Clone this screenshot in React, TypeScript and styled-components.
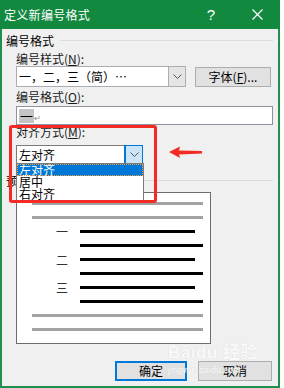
import styled, { createGlobalStyle } from 'styled-components';

const Global = createGlobalStyle`
  html, body {
    margin: 0;
    padding: 0;
    background: #ffffff;
  }
  body {
    font-family: 'Noto Sans CJK SC', 'Liberation Sans', sans-serif;
    font-size: 12px;
    color: #000;
  }
`;

const Dialog = styled.div`
  position: relative;
  box-sizing: border-box;
  width: 280px;
  height: 388px;
  background: #f0f0f0;
  border: 2px solid #1f9050;
  border-top: none;
  display: flex;
  flex-direction: column;
`;

const TitleBar = styled.div`
  height: 29px;
  margin: 0 -2px;
  background: #12893f;
  color: #ffffff;
  display: flex;
  align-items: center;
  padding-left: 4px;
  font-size: 12px;
  letter-spacing: 0.3px;
`;

const TitleText = styled.span`
  flex: 1;
`;

const TitleButton = styled.span`
  width: 46px;
  display: flex;
  justify-content: center;
  align-items: center;
  font-size: 15px;
  font-family: 'Liberation Sans', sans-serif;
`;

const Content = styled.div`
  position: relative;
  display: flex;
  flex-direction: column;
  padding: 0 6px 0 4px;
`;

const GroupHeader = styled.div<{ $mt: number }>`
  display: flex;
  align-items: center;
  gap: 6px;
  height: 13px;
  line-height: 13px;
  margin-top: ${p => p.$mt}px;

  &::after {
    content: '';
    flex: 1;
    height: 1px;
    background: #dcdcdc;
    margin-right: -1px;
  }
`;

const Section = styled.div`
  display: flex;
  flex-direction: column;
  padding-left: 10px;
`;

const Label = styled.div<{ $mt: number }>`
  height: 14px;
  line-height: 14px;
  margin-top: ${p => p.$mt}px;
  color: #1a1a1a;
`;

const Row = styled.div`
  display: flex;
  align-items: center;
  gap: 9px;
  height: 21px;
`;

const Combo = styled.div<{ $w: number; $h: number; $mt?: number; $focus?: boolean }>`
  position: relative;
  box-sizing: border-box;
  width: ${p => p.$w}px;
  height: ${p => p.$h}px;
  margin-top: ${p => p.$mt ?? 0}px;
  background: #ffffff;
  border: 1px solid ${p => (p.$focus ? '#7a7a7a' : '#abadb3')};
  display: flex;
  align-items: center;
`;

const ComboText = styled.span`
  flex: 1;
  padding-left: 2px;
  font-size: 12px;
  white-space: nowrap;
  overflow: hidden;
`;

const ArrowBox = styled.span<{ $active?: boolean }>`
  box-sizing: border-box;
  width: 17px;
  height: 100%;
  background: ${p => (p.$active ? '#cce4f7' : '#e5e5e5')};
  border-left: 1px solid ${p => (p.$active ? '#0078d7' : '#adadad')};
  outline: ${p => (p.$active ? '1px solid #0078d7' : 'none')};
  display: flex;
  align-items: center;
  justify-content: center;
`;

const Button = styled.button<{ $w: number; $primary?: boolean }>`
  box-sizing: border-box;
  width: ${p => p.$w}px;
  height: 20px;
  padding: 0;
  background: #e1e1e1;
  border: ${p => (p.$primary ? '2px solid #0078d7' : '1px solid #adadad')};
  font-family: 'Noto Sans CJK SC', 'Liberation Sans', sans-serif;
  font-size: 12px;
  color: #000;
  line-height: 16px;
`;

const TextInput = styled.div`
  box-sizing: border-box;
  height: 19px;
  margin-top: 2px;
  margin-right: -1px;
  background: #ffffff;
  border: 1px solid #8f8f9d;
  display: flex;
  align-items: center;
  padding-left: 2px;
`;

const Selected = styled.span`
  background: #c4c4c4;
  font-size: 13px;
  line-height: 14px;
  padding: 0 1px;
`;

const ReturnMark = styled.span`
  font-size: 8px;
  color: #8a8a8a;
  margin-top: 3px;
`;

const DropList = styled.div`
  position: absolute;
  top: 100%;
  left: -1px;
  box-sizing: border-box;
  width: 128px;
  height: 39px;
  background: #ffffff;
  border: 1px solid #7a7a7a;
  overflow: hidden;
  z-index: 2;
`;

const DropItem = styled.div<{ $active?: boolean }>`
  box-sizing: border-box;
  height: 12px;
  line-height: 12px;
  font-size: 12px;
  padding-left: 2px;
  white-space: nowrap;
  color: ${p => (p.$active ? '#ffffff' : '#000')};
  background: ${p => (p.$active ? '#0078d7' : 'transparent')};
  outline: ${p => (p.$active ? '1px dotted #f0a040' : 'none')};
  outline-offset: -1px;
`;

const PreviewBox = styled.div`
  box-sizing: border-box;
  width: 195px;
  height: 152px;
  margin-top: 5px;
  background: #ffffff;
  border: 1px solid #6d6d6d;
  display: flex;
  flex-direction: column;
  gap: 11px;
  padding-top: 9px;
`;

const PreviewRow = styled.div`
  display: flex;
  align-items: center;
  height: 3px;
`;

const Bar = styled.div<{ $left: number; $w: number; $gray?: boolean }>`
  margin-left: ${p => p.$left}px;
  width: ${p => p.$w}px;
  height: ${p => (p.$gray ? 2.5 : 3)}px;
  background: ${p => (p.$gray ? '#a3a3a3' : '#000')};
`;

const Num = styled.span`
  margin-left: 39px;
  width: 24px;
  font-size: 12px;
  line-height: 0;
  color: #333;
`;

const ButtonRow = styled.div`
  display: flex;
  justify-content: flex-end;
  gap: 11px;
  margin-top: 17px;
`;

const Annotation = styled.div`
  position: absolute;
  left: 7px;
  top: 125px;
  width: 148px;
  height: 78px;
  box-sizing: border-box;
  border: 3px solid #f42a24;
  border-radius: 3px;
  z-index: 3;
`;

const ArrowMark = styled.svg`
  position: absolute;
  left: 165px;
  top: 145px;
  z-index: 3;
`;

const Watermark = styled.div`
  position: absolute;
  left: 166px;
  top: 343px;
  display: flex;
  flex-direction: column;
  align-items: flex-start;
  color: rgba(255, 255, 255, 0.9);
  text-shadow: 0 0 1px #cfcfcf;
  font-family: 'Liberation Sans', 'Noto Sans CJK SC', sans-serif;
  pointer-events: none;
  z-index: 3;
`;

const WmMain = styled.span`
  font-size: 17px;
  font-weight: bold;
  line-height: 20px;
  letter-spacing: 0.5px;
`;

const WmSub = styled.span`
  font-size: 9px;
  line-height: 10px;
  margin-top: 2px;
`;

const Chevron = () => (
  <svg width="9" height="5" viewBox="0 0 9 5">
    <polyline points="0.5,0.5 4.5,4.5 8.5,0.5" fill="none" stroke="#555" strokeWidth="1" />
  </svg>
);

export default function App() {
  const rows = [
    { n: '', gray: true },
    { n: '', gray: true },
    { n: '一' },
    { n: null },
    { n: '二' },
    { n: null },
    { n: '三' },
    { n: null },
    { n: '', gray: true },
    { n: '', gray: true },
  ];

  return (
    <>
      <Global />
      <Dialog>
        <TitleBar>
          <TitleText>定义新编号格式</TitleText>
          <TitleButton>?</TitleButton>
          <TitleButton>
            <svg width="11" height="11" viewBox="0 0 11 11">
              <path d="M0.5 0.5 L10.5 10.5 M10.5 0.5 L0.5 10.5" stroke="#fff" strokeWidth="1.2" />
            </svg>
          </TitleButton>
        </TitleBar>

        <Content>
          <GroupHeader $mt={5}>编号格式</GroupHeader>
          <Section>
            <Label $mt={5}>编号样式(<u>N</u>):</Label>
            <Row>
              <Combo $w={170} $h={21}>
                <ComboText>一，二，三（简）…</ComboText>
                <ArrowBox>
                  <Chevron />
                </ArrowBox>
              </Combo>
              <Button $w={76}>字体(<u>F</u>)...</Button>
            </Row>
            <Label $mt={3}>编号格式(<u>O</u>):</Label>
            <TextInput>
              <Selected>一</Selected>
              <ReturnMark>↵</ReturnMark>
            </TextInput>
            <Label $mt={0}>对齐方式(<u>M</u>):</Label>
            <Combo $w={127} $h={19} $mt={6} $focus>
              <ComboText>左对齐</ComboText>
              <ArrowBox $active>
                <Chevron />
              </ArrowBox>
              <DropList>
                <DropItem $active>左对齐</DropItem>
                <DropItem>居中</DropItem>
                <DropItem>右对齐</DropItem>
              </DropList>
            </Combo>
          </Section>

          <GroupHeader $mt={10}>预览</GroupHeader>
          <Section>
            <PreviewBox>
              {rows.map((r, i) =>
                r.gray ? (
                  <PreviewRow key={i}>
                    <Bar $left={15} $w={171} $gray />
                  </PreviewRow>
                ) : r.n ? (
                  <PreviewRow key={i}>
                    <Num>{r.n}</Num>
                    <Bar $left={0} $w={115} />
                  </PreviewRow>
                ) : (
                  <PreviewRow key={i}>
                    <Bar $left={63} $w={123} />
                  </PreviewRow>
                )
              )}
            </PreviewBox>
          </Section>

          <ButtonRow>
            <Button $w={72} $primary>确定</Button>
            <Button $w={74}>取消</Button>
          </ButtonRow>
        </Content>

        <Annotation />
        <ArrowMark width="37" height="15" viewBox="0 0 37 15">
          <path d="M2 7 L13 1.5 L12 5.5 L35 6 L35 8.5 L12 9.5 L13 13 Z" fill="#f42a24" />
        </ArrowMark>
        <Watermark>
          <WmMain>Baidu 经验</WmMain>
          <WmSub>jingyan.baidu.com</WmSub>
        </Watermark>
      </Dialog>
    </>
  );
}
